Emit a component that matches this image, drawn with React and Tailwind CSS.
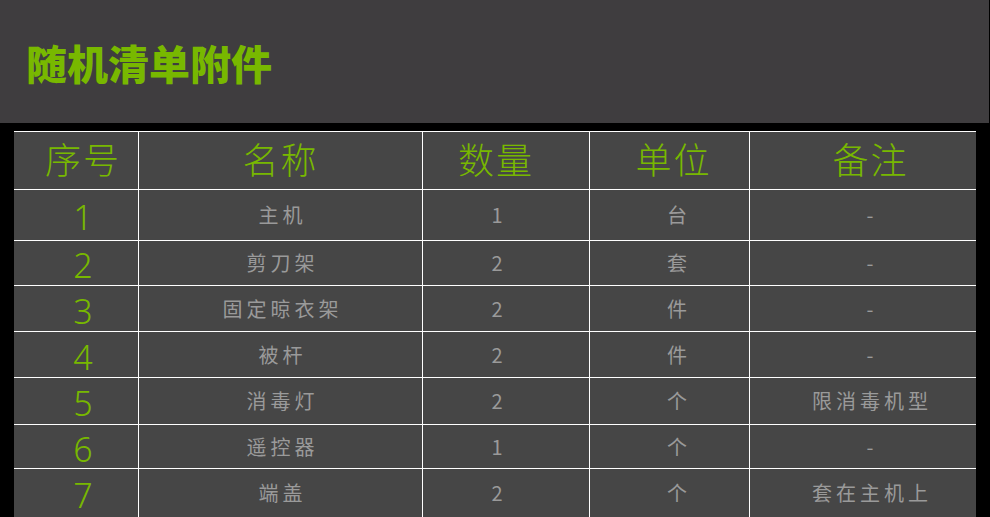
import React from "react";

const rows = [
  { n: "1", name: "主机", qty: "1", unit: "台", note: "-", h: "h-[50px]" },
  { n: "2", name: "剪刀架", qty: "2", unit: "套", note: "-", h: "h-[44px]" },
  { n: "3", name: "固定晾衣架", qty: "2", unit: "件", note: "-", h: "h-[45px]" },
  { n: "4", name: "被杆", qty: "2", unit: "件", note: "-", h: "h-[45px]" },
  { n: "5", name: "消毒灯", qty: "2", unit: "个", note: "限消毒机型", h: "h-[46px]" },
  { n: "6", name: "遥控器", qty: "1", unit: "个", note: "-", h: "h-[43px]" },
  { n: "7", name: "端盖", qty: "2", unit: "个", note: "套在主机上", h: "h-[48px]" },
];

const font = { fontFamily: '"Noto Sans CJK SC", "Noto Sans", sans-serif' };

export default function App() {
  return (
    <div className="w-[990px] h-[517px] bg-black overflow-hidden" style={font}>
      <div className="w-[989px] h-[123px] bg-[#3f3d3f] flex items-center pl-[26px] pt-[2px]">
        <h1 className="text-[41px] leading-none font-black text-[#78b800]">随机清单附件</h1>
      </div>
      <div className="h-[8px]" />
      <div className="ml-[14px] w-[962px] bg-white pt-px">
        <div className="grid grid-cols-[124px_283px_166px_159px_226px] gap-px">
          {[
            ["序号", "pl-[14px]"],
            ["名称", ""],
            ["数量", "pr-[20px]"],
            ["单位", "pl-[8px]"],
            ["备注", "pl-[15px]"],
          ].map(([t, p]) => (
            <div
              key={t}
              className={`h-[57px] bg-[#464646] flex items-center justify-center pb-[6px] text-[36px] leading-none font-light text-[#78b800] tracking-[2px] ${p}`}
            >
              {t}
            </div>
          ))}
          {rows.map((r) => (
            <React.Fragment key={r.n}>
              <div className={`${r.h} bg-[#464646] flex items-center justify-center pl-[14px] pt-[4px] text-[34px] leading-none text-[#78b800]`}>
                <span style={{ fontFamily: '"Noto Sans", sans-serif', fontWeight: 350 }}>{r.n}</span>
              </div>
              <div className={`${r.h} bg-[#464646] flex items-center justify-center text-[20px] leading-none text-[#9a9a9a] tracking-[4px] pl-[4px]`}>
                {r.name}
              </div>
              <div className={`${r.h} bg-[#464646] flex items-center justify-center pr-[18px] text-[20px] leading-none text-[#9a9a9a]`}>
                {r.qty}
              </div>
              <div className={`${r.h} bg-[#464646] flex items-center justify-center pl-[15px] text-[20px] leading-none text-[#9a9a9a]`}>
                {r.unit}
              </div>
              <div className={`${r.h} bg-[#464646] flex items-center justify-center pl-[18px] text-[20px] leading-none text-[#9a9a9a] tracking-[4px]`}>
                {r.note}
              </div>
            </React.Fragment>
          ))}
        </div>
      </div>
    </div>
  );
}
